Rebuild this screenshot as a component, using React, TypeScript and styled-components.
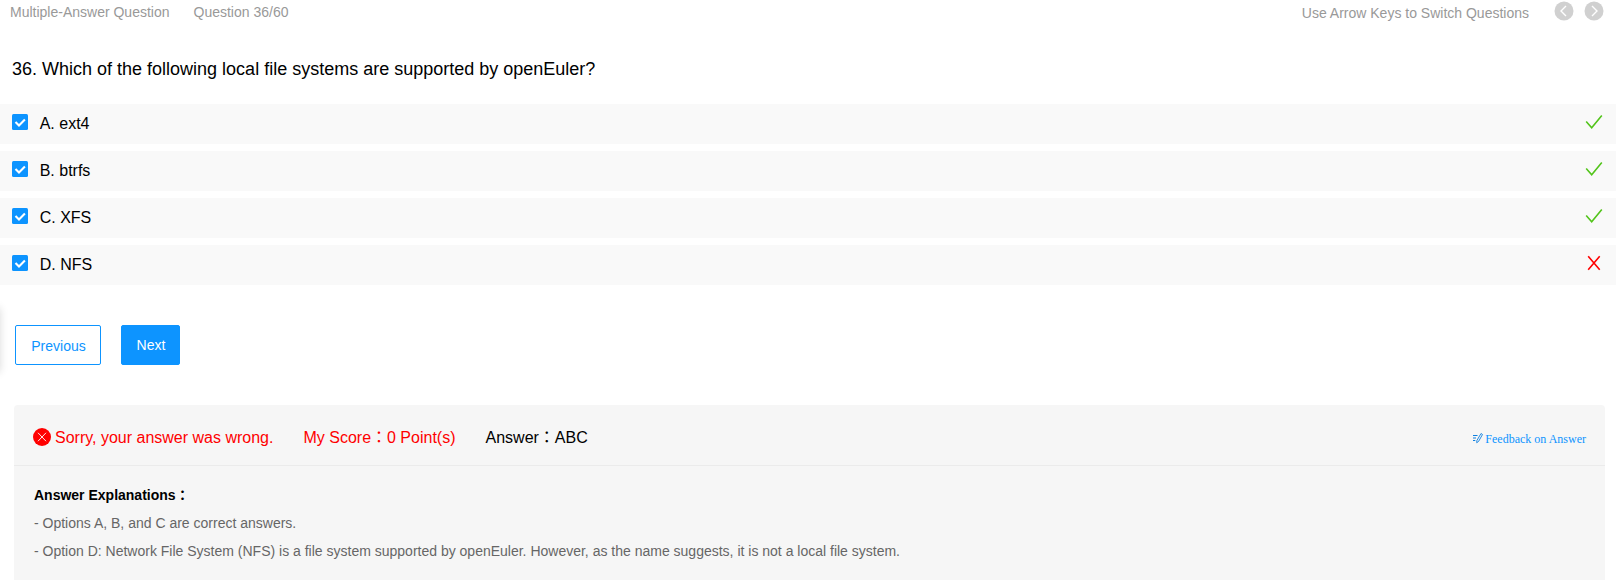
import React from "react";
import styled, { createGlobalStyle } from "styled-components";

const GlobalStyle = createGlobalStyle`
  * { box-sizing: border-box; }
  body {
    margin: 0;
    background: #fff;
    overflow: hidden;
    font-family: "Liberation Sans", "Noto Sans CJK JP", sans-serif;
    color: #000;
  }
`;

const Page = styled.main`
  position: relative;
  height: 580px;
  overflow: hidden;
`;

const TopBar = styled.header`
  display: flex;
  justify-content: space-between;
  height: 32px;
  padding: 0 12px 0 10px;
  font-size: 14px;
  line-height: 16px;
  color: #999;
`;

const Meta = styled.div`
  display: flex;
  gap: 24px;
  padding-top: 4px;
`;

const Switcher = styled.div`
  display: flex;
  align-items: flex-start;
`;

const Hint = styled.span`
  padding-top: 5px;
  margin-right: 25px;
`;

const RoundButton = styled.button`
  display: flex;
  width: 20px;
  height: 20px;
  margin: 1px 0 0 0;
  padding: 0;
  border: 0;
  background: none;
  & + & { margin-left: 10px; }
`;

const Title = styled.h1`
  margin: 0;
  height: 72px;
  padding: 26px 12px 0;
  font-size: 18px;
  line-height: 22px;
  font-weight: 400;
`;

const Options = styled.div`
  display: flex;
  flex-direction: column;
  gap: 7px;
`;

const OptionRow = styled.label`
  display: flex;
  align-items: flex-start;
  height: 40px;
  padding: 10px 13px 0 12px;
  background: #f9f9f9;
  font-size: 16px;
`;

const Checkbox = styled.span`
  display: flex;
  width: 16px;
  height: 16px;
  border-radius: 1.5px;
  background: #0d94ff;
`;

const OptionText = styled.span`
  flex: 1;
  margin-left: 11.7px;
  line-height: 20px;
`;

const Actions = styled.div`
  display: flex;
  gap: 20px;
  padding: 40px 15px;
`;

const ActionButton = styled.button<{ $primary?: boolean }>`
  width: ${(p) => (p.$primary ? 59 : 86)}px;
  height: 40px;
  padding: ${(p) => (p.$primary ? "0 0 1px 1px" : "1px 0 0 1px")};
  border: 1px solid #0d94ff;
  border-radius: 2px;
  background: ${(p) => (p.$primary ? "#0d94ff" : "#fff")};
  color: ${(p) => (p.$primary ? "#fff" : "#0d94ff")};
  font: 14px "Liberation Sans", sans-serif;
`;

const Panel = styled.section`
  height: 200px;
  margin: 0 11px 0 14px;
  border-radius: 4px;
  background: #f6f6f6;
`;

const ResultBar = styled.div`
  display: flex;
  align-items: flex-start;
  height: 61px;
  padding: 23px 19px 0;
  border-bottom: 1px solid #ebebeb;
  font-size: 16px;
  line-height: 20px;
`;

const ResultText = styled.span<{ $wrong?: boolean; $gap: number }>`
  margin-left: ${(p) => p.$gap}px;
  color: ${(p) => (p.$wrong ? "#f00" : "#000")};
`;

const Feedback = styled.a`
  display: flex;
  gap: 2px;
  margin: 4px 0 0 auto;
  font: 12px/14px "Liberation Serif", serif;
  color: #0d94ff;
`;

const Explanation = styled.div`
  padding: 15px 20px;
  font-size: 14px;
  line-height: 28px;
  color: #666;
`;

const Heading = styled.h2`
  margin: 0;
  height: 28px;
  font-size: 14px;
  line-height: 28px;
  color: #000;
`;

const Line = styled.p`
  margin: 0;
`;

const DrawerEdge = styled.div`
  position: absolute;
  left: -10px;
  top: 308px;
  width: 10px;
  height: 64px;
  box-shadow: 0 0 9px rgba(0, 0, 0, 0.15);
`;

const Arrow = ({ d }: { d: string }) => (
  <svg width="20" height="20" viewBox="0 0 20 20" fill="none">
    <circle cx="10" cy="10" r="9.5" fill="#d0d0d0" />
    <path d={d} stroke="#fff" strokeWidth="1.4" />
  </svg>
);

const CheckGlyph = () => (
  <svg width="16" height="16" viewBox="0 0 16 16" fill="none">
    <path d="M3.500 7.900 7 11.500 12.900 5.600" stroke="#fff" strokeWidth="2.1" />
  </svg>
);

const Mark = ({ ok }: { ok: boolean }) => (
  <svg width="18" height="18" viewBox="0 0 18 18" fill="none">
    {ok ? (
      <path d="M1.200 7.500 6.700 13.700 16.800 1.500" stroke="#52c41a" strokeWidth="1.6" />
    ) : (
      <path d="M3.200 1.200 14.700 14.800M14.700 1.200 3.200 14.800" stroke="#f00" strokeWidth="1.6" />
    )}
  </svg>
);

const options = [
  { text: "A. ext4", ok: true },
  { text: "B. btrfs", ok: true },
  { text: "C. XFS", ok: true },
  { text: "D. NFS", ok: false },
];

export default function App() {
  return (
    <Page>
      <GlobalStyle />
      <TopBar>
        <Meta>
          <span>Multiple-Answer Question</span>
          <span>Question 36/60</span>
        </Meta>
        <Switcher>
          <Hint>Use Arrow Keys to Switch Questions</Hint>
          <RoundButton aria-label="Previous question">
            <Arrow d="M12 5 7 10l5 5" />
          </RoundButton>
          <RoundButton aria-label="Next question">
            <Arrow d="m8 5 5 5-5 5" />
          </RoundButton>
        </Switcher>
      </TopBar>
      <Title>36. Which of the following local file systems are supported by openEuler?</Title>
      <Options>
        {options.map((o) => (
          <OptionRow key={o.text}>
            <Checkbox>
              <CheckGlyph />
            </Checkbox>
            <OptionText>{o.text}</OptionText>
            <Mark ok={o.ok} />
          </OptionRow>
        ))}
      </Options>
      <Actions>
        <ActionButton>Previous</ActionButton>
        <ActionButton $primary>Next</ActionButton>
      </Actions>
      <Panel>
        <ResultBar>
          <svg width="18" height="18" viewBox="0 0 18 18" fill="none">
            <circle cx="9" cy="9" r="9" fill="#f00" />
            <path d="m5 4.800 8 8.400m0-8.400-8 8.400" stroke="#fff" strokeWidth="0.9" />
          </svg>
          <ResultText $wrong $gap={4}>Sorry, your answer was wrong.</ResultText>
          <ResultText $wrong $gap={30}>My Score：0 Point(s)</ResultText>
          <ResultText $gap={30}>Answer：ABC</ResultText>
          <Feedback>
            <svg width="10" height="12" viewBox="0 0 10 12" fill="none" stroke="#0d7fe0">
              <path d="M0 3.500h4.500M0 6h3M0 8.500h2.300" />
              <path d="M8 1.500 9.500 2.500 5.500 9.500 3.700 10.700 3.900 8.500Z" strokeWidth="0.9" />
            </svg>
            Feedback on Answer
          </Feedback>
        </ResultBar>
        <Explanation>
          <Heading>Answer Explanations：</Heading>
          <Line>- Options A, B, and C are correct answers.</Line>
          <Line>
            - Option D: Network File System (NFS) is a file system supported by openEuler. However, as the name
            suggests, it is not a local file system.
          </Line>
        </Explanation>
      </Panel>
      <DrawerEdge />
    </Page>
  );
}
